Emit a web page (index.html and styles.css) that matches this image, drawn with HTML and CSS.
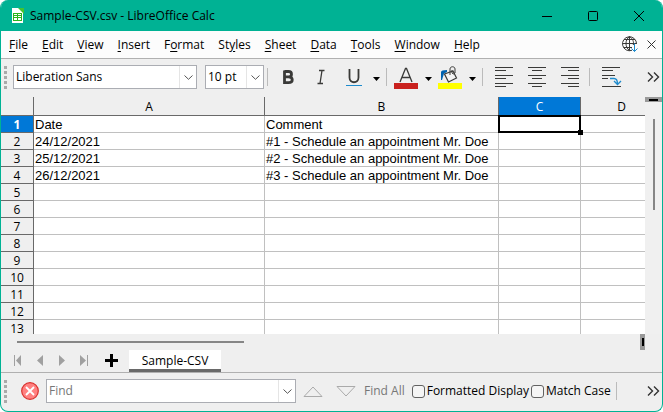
FILE: index.html
```html
<!DOCTYPE html>
<html lang="en">
<head>
<meta charset="utf-8">
<title>Sample-CSV.csv - LibreOffice Calc</title>
<link rel="stylesheet" href="styles.css">
</head>
<body>
<div class="window">
  <header class="titlebar">
    <svg class="app-icon" width="13" height="16" viewBox="0 0 13 16"><path d="M1 0H8L12 4V15H1Z" fill="#fff"/><path d="M7 0H13V6Z" fill="#43c330"/><rect x="2" y="5" width="9" height="8" fill="#2cb51c"/><path d="M3 6h3v1h-3zM7 6h3v1h-3zM3 8h3v1h-3zM7 8h3v1h-3zM3 10h3v2h-3zM7 10h3v2h-3z" fill="#fff"/></svg>
    <h1 class="title">Sample-CSV.csv - LibreOffice Calc</h1>
    <div class="window-buttons">
      <button class="window-button" aria-label="Minimize"><svg width="10" height="10"><path d="M0 5.500H10" stroke="#000"/></svg></button>
      <button class="window-button" aria-label="Maximize"><svg width="10" height="10"><rect x="0.500" y="0.500" width="9" height="9" rx="1" fill="none" stroke="#000"/></svg></button>
      <button class="window-button" aria-label="Close"><svg width="10" height="10"><path d="M0 0L10 10M10 0L0 10" stroke="#000"/></svg></button>
    </div>
  </header>

  <nav class="menubar">
    <button class="menu"><u>F</u>ile</button>
    <button class="menu"><u>E</u>dit</button>
    <button class="menu"><u>V</u>iew</button>
    <button class="menu"><u>I</u>nsert</button>
    <button class="menu">F<u>o</u>rmat</button>
    <button class="menu">St<u>y</u>les</button>
    <button class="menu"><u>S</u>heet</button>
    <button class="menu"><u>D</u>ata</button>
    <button class="menu"><u>T</u>ools</button>
    <button class="menu"><u>W</u>indow</button>
    <button class="menu"><u>H</u>elp</button>
    <div class="menu-end">
      <button class="icon-button" aria-label="Check for updates"><svg width="17" height="17" viewBox="0 0 17 17" fill="none"><path d="M10 14.300A7 7 0 1 1 14.500 8M7.500 0.500V14.500M0.500 7.500H14.500M2 3.500H13M2 11.500H10M7.500 0.500C2.800 4 2.800 11 7.500 14.500M7.500 0.500C11 3 12 6 11.300 9" stroke="#3a3a38"/><path d="M12.500 7.500V15.500M9.500 12.500L12.500 15.500L15.500 12.500" stroke="#1e8bcd"/></svg></button>
      <button class="icon-button" aria-label="Close document"><svg width="9" height="9"><path d="M0.500 0.500L8.500 8.500M8.500 0.500L0.500 8.500" stroke="#333"/></svg></button>
    </div>
  </nav>

  <div class="toolbar">
    <span class="grip"></span>
    <div class="combo combo-font">
      <input class="combo-input" type="text" value="Liberation Sans" aria-label="Font name">
      <button class="combo-arrow" aria-label="Show fonts"><svg width="9" height="5"><path d="M0.500 0.500L4.500 4.300L8.500 0.500" fill="none" stroke="#555"/></svg></button>
    </div>
    <div class="combo combo-size">
      <input class="combo-input" type="text" value="10 pt" aria-label="Font size">
      <button class="combo-arrow" aria-label="Show sizes"><svg width="9" height="5"><path d="M0.500 0.500L4.500 4.300L8.500 0.500" fill="none" stroke="#555"/></svg></button>
    </div>
    <span class="divider"></span>
    <div class="text-tools">
      <button class="tool" aria-label="Bold"><svg width="24" height="24" viewBox="0 0 24 24"><path d="M8.500 6.500H12.500C16.500 6.500 16.500 11.800 12.500 11.800H8.500M12.500 11.800C17.500 11.800 17.500 17.700 12.500 17.700H8.500V5.500" fill="none" stroke="#3a3a38" stroke-width="2.800"/></svg></button>
      <button class="tool" aria-label="Italic"><svg width="24" height="24" viewBox="0 0 24 24"><path d="M10 5.500H15.500M8.500 18.500H14M13 5.500L11 18.500" fill="none" stroke="#3a3a38" stroke-width="1.300"/></svg></button>
      <button class="tool" aria-label="Underline"><svg width="24" height="24" viewBox="0 0 24 24"><path d="M7.500 4V12.500C7.500 18.800 16.500 18.800 16.500 12.500V4" fill="none" stroke="#3a3a38" stroke-width="1.800"/><path d="M4 20.500H20" stroke="#1e8bcd"/></svg></button>
      <button class="drop" aria-label="Underline styles"><svg width="7" height="4"><path d="M0 0H7L3.500 4Z"/></svg></button>
    </div>
    <span class="divider"></span>
    <div class="color-tools">
      <button class="tool" aria-label="Font color"><svg width="24" height="24" viewBox="0 0 24 24"><path d="M6 16L11.500 2.500H12.500L18 16M8 11.500H16" fill="none" stroke="#3a3a38" stroke-width="1.300"/><path d="M0 17H24V23H0Z" fill="#c9211e"/></svg></button>
      <button class="drop" aria-label="Font colors"><svg width="7" height="4"><path d="M0 0H7L3.500 4Z"/></svg></button>
      <button class="tool" aria-label="Highlighting color"><svg width="24" height="24" viewBox="0 0 24 24"><path d="M3 14V6Q3 4 9 4V6L6 7.500L4 14Z" fill="#0063b1"/><path d="M6.500 8L15 5L18.500 12L10.500 16Z" fill="#f4f4f4" stroke="#3a3a38" stroke-width="1.200"/><path d="M12 9V3C12 0 17 0 17 3V7Q15 9 14 7V4" fill="none" stroke="#3a3a38"/><path d="M0 17H24V23H0Z" fill="#ff0"/></svg></button>
      <button class="drop" aria-label="Highlighting colors"><svg width="7" height="4"><path d="M0 0H7L3.500 4Z"/></svg></button>
    </div>
    <span class="divider"></span>
    <div class="align-tools">
      <button class="align" aria-label="Align left"><svg width="18" height="20"><path d="M0 .5H18M0 3.500H11M0 8.500H18M0 11.500H11M0 16.500H18M0 19.500H11" stroke="#3a3a38"/></svg></button>
      <button class="align" aria-label="Center"><svg width="18" height="20"><path d="M0 .5H18M4 3.500H14M0 8.500H18M4 11.500H14M0 16.500H18M4 19.500H14" stroke="#3a3a38"/></svg></button>
      <button class="align" aria-label="Align right"><svg width="18" height="20"><path d="M0 .5H18M7 3.500H18M0 8.500H18M7 11.500H18M0 16.500H18M7 19.500H18" stroke="#3a3a38"/></svg></button>
    </div>
    <span class="divider"></span>
    <button class="align" aria-label="Wrap text"><svg width="20" height="20" fill="none"><path d="M0 .5H18M0 3.500H11M0 8.500H13M0 11.500H6M0 19.500H19" stroke="#3a3a38"/><path d="M8 11.500H12Q15.500 11.500 15.500 17M12 14L15.500 17.500L19 14" stroke="#1e8bcd" stroke-width="1.300"/></svg></button>
    <button class="icon-button more" aria-label="More formatting"><svg width="13" height="10"><path d="M1 .5L5.500 5L1 9.500M7 .5L11.500 5L7 9.500" fill="none" stroke="#333" stroke-width="1.400"/></svg></button>
  </div>

  <main class="sheet-area">
    <div class="grid-clip">
      <table class="grid">
        <colgroup><col class="col-row"><col class="col-a"><col class="col-b"><col class="col-c"><col class="col-d"></colgroup>
        <thead><tr><th></th><th>A</th><th>B</th><th class="active">C</th><th>D</th></tr></thead>
        <tbody>
          <tr><th class="active">1</th><td>Date</td><td>Comment</td><td class="selected"></td><td></td></tr>
          <tr><th>2</th><td>24/12/2021</td><td>#1 - Schedule an appointment Mr. Doe</td><td></td><td></td></tr>
          <tr><th>3</th><td>25/12/2021</td><td>#2 - Schedule an appointment Mr. Doe</td><td></td><td></td></tr>
          <tr><th>4</th><td>26/12/2021</td><td>#3 - Schedule an appointment Mr. Doe</td><td></td><td></td></tr>
          <tr><th>5</th><td></td><td></td><td></td><td></td></tr>
          <tr><th>6</th><td></td><td></td><td></td><td></td></tr>
          <tr><th>7</th><td></td><td></td><td></td><td></td></tr>
          <tr><th>8</th><td></td><td></td><td></td><td></td></tr>
          <tr><th>9</th><td></td><td></td><td></td><td></td></tr>
          <tr><th>10</th><td></td><td></td><td></td><td></td></tr>
          <tr><th>11</th><td></td><td></td><td></td><td></td></tr>
          <tr><th>12</th><td></td><td></td><td></td><td></td></tr>
          <tr><th>13</th><td></td><td></td><td></td><td></td></tr>
        </tbody>
      </table>
    </div>
    <div class="vscroll"><span class="vsplit"></span><span class="vthumb"></span></div>
  </main>
  <div class="hscroll"><span class="hthumb"></span><span class="hsplit"></span></div>

  <div class="tabs">
    <button class="nav" aria-label="First sheet"><svg width="8" height="11"><path d="M.5 0V11" stroke="#a0a0a0"/><path d="M7 0V11L2 5.500Z" fill="#a0a0a0"/></svg></button>
    <button class="nav" aria-label="Previous sheet"><svg width="8" height="11"><path d="M7 0V11L1 5.500Z" fill="#a0a0a0"/></svg></button>
    <button class="nav" aria-label="Next sheet"><svg width="8" height="11"><path d="M1 0V11L7 5.500Z" fill="#a0a0a0"/></svg></button>
    <button class="nav" aria-label="Last sheet"><svg width="8" height="11"><path d="M7.500 0V11" stroke="#a0a0a0"/><path d="M0 0V11L6 5.500Z" fill="#a0a0a0"/></svg></button>
    <button class="nav add" aria-label="Add sheet"><svg width="13" height="13"><path d="M6.500 0V13M0 6.500H13" stroke="#000" stroke-width="3"/></svg></button>
    <button class="tab">Sample-CSV</button>
  </div>

  <form class="findbar">
    <span class="grip"></span>
    <button type="button" class="icon-button close-find" aria-label="Close find bar"><svg width="18" height="18"><circle cx="9" cy="9" r="8.300" fill="#ff8080" stroke="#d9302c" stroke-width="1.200"/><path d="M5 5L13 13M13 5L5 13" stroke="#fff" stroke-width="1.800"/></svg></button>
    <div class="combo combo-find">
      <input class="combo-input" type="text" placeholder="Find" aria-label="Find">
      <button type="button" class="combo-arrow" aria-label="Recent searches"><svg width="9" height="5"><path d="M0.500 0.500L4.500 4.300L8.500 0.500" fill="none" stroke="#555"/></svg></button>
    </div>
    <div class="find-steps">
      <button type="button" class="icon-button" aria-label="Find previous"><svg width="20" height="11"><path d="M1 10.500H19L10 1Z" fill="none" stroke="#aaa"/></svg></button>
      <button type="button" class="icon-button" aria-label="Find next"><svg width="20" height="11"><path d="M1 .5H19L10 10Z" fill="none" stroke="#aaa"/></svg></button>
    </div>
    <button type="button" class="find-all">Find All</button>
    <label class="check"><input type="checkbox">Formatted Display</label>
    <label class="check"><input type="checkbox">Match Case</label>
    <span class="divider"></span>
    <button type="button" class="icon-button more" aria-label="More find options"><svg width="13" height="10"><path d="M1 .5L5.500 5L1 9.500M7 .5L11.500 5L7 9.500" fill="none" stroke="#333" stroke-width="1.400"/></svg></button>
  </form>
</div>
</body>
</html>
```
FILE: styles.css
```css
* { box-sizing: border-box; }

body {
  margin: 0;
  background: #fff;
  color: #000;
  font: 12px/16px "Open Sans", "Noto Sans", sans-serif;
}

button {
  display: flex;
  align-items: center;
  justify-content: center;
  flex: none;
  padding: 0;
  border: 0;
  background: none;
  color: inherit;
  font: inherit;
}

svg { display: block; flex: none; }

.window {
  display: flex;
  flex-direction: column;
  height: 100vh;
  border: 1px solid #00b294;
  border-top: 0;
  border-radius: 8px;
  background: #efefef;
  overflow: hidden;
}

.titlebar {
  display: flex;
  flex: none;
  align-items: center;
  height: 31px;
  padding-left: 10px;
  background: #00b294;
}
.title { margin: 0 0 0 6px; font: inherit; }
.window-buttons { display: flex; margin-left: auto; }
.window-button { width: 46px; height: 31px; }

.menubar {
  display: flex;
  flex: none;
  align-items: center;
  gap: 14px;
  height: 28px;
  padding: 0 6px 0 8px;
  border-bottom: 1px solid #b0b0b0;
  background: #fcfcfc;
}
.menu u { text-underline-offset: 2px; }
.menu-end { display: flex; align-items: center; gap: 8px; margin-left: auto; }

.toolbar {
  display: flex;
  flex: none;
  align-items: center;
  height: 38px;
  padding: 0 2px 2px 3px;
}
.grip {
  flex: none;
  width: 3px;
  height: 23px;
  background: repeating-linear-gradient(#aaa 0 3px, #efefef 3px 5px);
}
.combo {
  display: flex;
  flex: none;
  height: 24px;
  border: 1px solid #abadb3;
  background: #fff;
}
.combo-font { width: 184px; margin-left: 6px; }
.combo-size { width: 59px; margin: 0 3px 0 8px; }
.combo-find { width: 250px; margin-left: 7px; }
.combo-input {
  flex: 1;
  min-width: 0;
  padding: 0 2px;
  border: 0;
  background: none;
  color: inherit;
  font: inherit;
  outline: 0;
}
.combo-input::placeholder { color: #777; opacity: 1; }
.combo-arrow { width: 17px; border-left: 1px solid #e5e5e5; }
.divider { flex: none; width: 1px; height: 18px; background: #bbb; }

.text-tools, .color-tools, .align-tools { display: flex; align-items: center; }
.text-tools { gap: 9px; margin: 0 6px 0 8px; }
.tool { width: 24px; height: 24px; }
.drop { width: 7px; padding-top: 4px; }
.text-tools .drop { margin-left: -2px; }
.color-tools { gap: 6px; margin: 0 6px 0 7px; }
.color-tools .tool { padding-top: 2px; }
.color-tools .drop { margin-left: 1px; }
.align-tools { gap: 15px; margin: 0 10px 0 12px; }
.toolbar > .align { margin-left: 12px; }
.more { margin-left: auto; }

.sheet-area { display: flex; flex: 1; min-height: 0; background: #fff; }
.grid-clip { flex: 1; min-width: 0; overflow: hidden; }
.grid {
  width: 662px;
  table-layout: fixed;
  border-spacing: 0;
}
.col-row { width: 33px; }
.col-a { width: 231px; }
.col-b { width: 234px; }
.col-c, .col-d { width: 82px; }
.grid th, .grid td { height: 17px; padding: 2px 0 0; line-height: 14px; }
.grid th {
  border: solid #696969;
  border-width: 0 1px 1px 0;
  background: #efefef;
  font-weight: 400;
}
.grid thead th { height: 19px; line-height: 16px; }
.grid .active { background: #0078d7; color: #fff; }
.grid tbody .active { font-weight: 700; }
.grid td {
  position: relative;
  padding-left: 1px;
  border: solid #c0c0c0;
  border-width: 0 1px 1px 0;
  font-family: "Liberation Sans", Arial, sans-serif;
  font-size: 13px;
  white-space: nowrap;
}
.grid .selected { z-index: 1; }
.selected::before {
  content: "";
  position: absolute;
  inset: -1px -1px -1px -1px;
  border: 2px solid #000;
}
.selected::after {
  content: "";
  position: absolute;
  right: -3px;
  bottom: -3px;
  width: 5px;
  height: 5px;
  background: #000;
}

.vscroll {
  display: flex;
  flex: none;
  flex-direction: column;
  align-items: center;
  width: 17px;
  background: #f0f0f0;
}
.vsplit { width: 100%; height: 5px; border: solid #999; border-width: 2px 4px 1px; background: #000; }
.vthumb { width: 2px; height: 91px; margin-top: 17px; background: #868686; }

.hscroll {
  display: flex;
  flex: none;
  align-items: center;
  justify-content: space-between;
  height: 16px;
  padding: 0 17px 0 16px;
}
.hthumb { width: 227px; height: 2px; background: #868686; }
.hsplit { width: 5px; height: 16px; border: solid #999; border-width: 4px 1px 4px 2px; background: #000; }

.tabs {
  display: flex;
  flex: none;
  align-items: flex-start;
  height: 23px;
  padding-left: 13px;
  border-bottom: 1px solid #b0b0b0;
}
.nav { width: 8px; height: 20px; margin-right: 14px; }
.add { width: 13px; margin: 0 11px 0 3px; }
.tab { width: 92px; height: 22px; padding-top: 2px; border-bottom: 3px solid #696969; background: #fff; }

.findbar {
  display: flex;
  flex: none;
  align-items: center;
  height: 38px;
  padding: 0 2px 2px 3px;
}
.close-find { margin-left: 14px; }
.find-steps { display: flex; gap: 13px; margin: 0 8px 0 7px; }
.find-all { color: #777; }
.check { display: flex; flex: none; align-items: center; gap: 2px; margin-left: 7px; white-space: nowrap; }
.check + .check { margin-left: 2px; }
.check input {
  appearance: none;
  width: 13px;
  height: 13px;
  margin: 0;
  border: 1px solid #626262;
  border-radius: 3px;
  background: #f5f5f5;
}
.check ~ .divider { margin-left: 5px; }
```
